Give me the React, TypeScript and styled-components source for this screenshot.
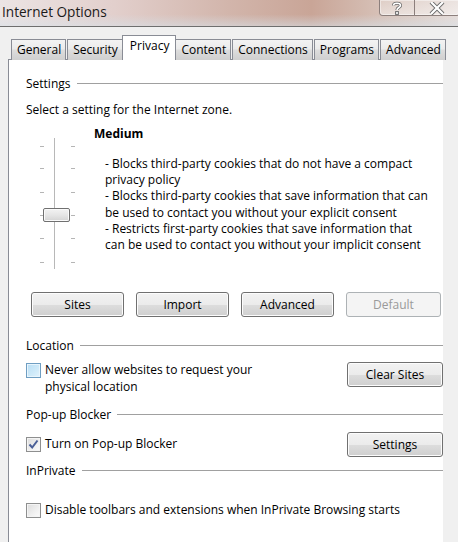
import styled, { createGlobalStyle, css } from 'styled-components';

const GlobalStyle = createGlobalStyle`
  html, body {
    margin: 0;
    padding: 0;
    background: #f0f0f0;
  }
  body {
    font-family: 'Open Sans', 'Noto Sans', sans-serif;
    font-size: 12px;
    color: #000;
  }
`;

const TABS = ['General', 'Security', 'Privacy', 'Content', 'Connections', 'Programs', 'Advanced'];
const ACTIVE_TAB = 'Privacy';

const DESCRIPTION = [
  '- Blocks third-party cookies that do not have a compact',
  'privacy policy',
  '- Blocks third-party cookies that save information that can',
  'be used to contact you without your explicit consent',
  '- Restricts first-party cookies that save information that',
  'can be used to contact you without your implicit consent',
];

function TrackBar() {
  const ticks = [145, 167, 191, 214, 237, 261].map((y) => y - 135);
  return (
    <svg width="68" height="140" viewBox="0 0 68 140">
      <rect x="28" y="2" width="2" height="131" fill="#d6d6d6" />
      <line x1="29.5" y1="2" x2="29.5" y2="133" stroke="#ffffff" />
      <line x1="28.5" y1="2" x2="28.5" y2="133" stroke="#b8b8b8" />
      {ticks.map((y) => (
        <g key={y} stroke="#b5b5b5">
          <line x1="14" y1={y + 0.5} x2="18" y2={y + 0.5} />
          <line x1="45" y1={y + 0.5} x2="49" y2={y + 0.5} />
        </g>
      ))}
      <defs>
        <linearGradient id="thumb" x1="0" y1="0" x2="0" y2="1">
          <stop offset="0" stopColor="#f4f4f4" />
          <stop offset="0.5" stopColor="#e6e6e6" />
          <stop offset="1" stopColor="#d2d2d2" />
        </linearGradient>
      </defs>
      <rect x="17.5" y="72.5" width="26" height="13" rx="1.5" fill="url(#thumb)" stroke="#707070" />
      <rect x="18.5" y="73.5" width="24" height="11" rx="1" fill="none" stroke="#fbfbfb" />
    </svg>
  );
}

function CheckMark() {
  return (
    <svg width="11" height="11" viewBox="0 0 11 11">
      <path d="M1.5 5.5 L4.2 8.5 L9.5 1.5" fill="none" stroke="#4a5f97" strokeWidth="2" />
    </svg>
  );
}

function HelpGlyph() {
  return (
    <svg width="14" height="14" viewBox="0 0 14 14">
      <path
        d="M3.5 4.5 C3.5 1.5 10.5 1.5 10.5 4.5 C10.5 6.5 7 6.5 7 9"
        fill="none"
        stroke="#6b6b6b"
        strokeWidth="3.2"
      />
      <path
        d="M3.5 4.5 C3.5 1.5 10.5 1.5 10.5 4.5 C10.5 6.5 7 6.5 7 9"
        fill="none"
        stroke="#ffffff"
        strokeWidth="1.6"
      />
      <rect x="5.6" y="10.6" width="2.8" height="2.8" fill="#ffffff" stroke="#6b6b6b" />
    </svg>
  );
}

function CloseGlyph() {
  return (
    <svg width="16" height="13" viewBox="0 0 16 13">
      <path d="M2 0 L14 12 M14 0 L2 12" stroke="#6b6b6b" strokeWidth="4" />
      <path d="M2 0 L14 12 M14 0 L2 12" stroke="#ffffff" strokeWidth="2.2" />
    </svg>
  );
}

export default function App() {
  return (
    <>
      <GlobalStyle />
      <Window>
        <TitleBar>
          <Title>Internet Options</Title>
          <CaptionButtons>
            <CaptionButton $w={34}>
              <HelpGlyph />
            </CaptionButton>
            <CaptionButton $w={44}>
              <CloseGlyph />
            </CaptionButton>
          </CaptionButtons>
        </TitleBar>

        <Dialog>
          <TabStrip>
            {TABS.map((tab) => (
              <Tab key={tab} $active={tab === ACTIVE_TAB}>
                {tab}
              </Tab>
            ))}
          </TabStrip>

          <Panel>
            <GroupHeader>Settings</GroupHeader>
            <Prompt>Select a setting for the Internet zone.</Prompt>

            <LevelRow>
              <TrackBar />
              <LevelText>
                <LevelName>Medium</LevelName>
                <Description>
                  {DESCRIPTION.map((line) => (
                    <div key={line}>{line}</div>
                  ))}
                </Description>
              </LevelText>
            </LevelRow>

            <ButtonRow>
              <Button>Sites</Button>
              <Button>Import</Button>
              <Button>Advanced</Button>
              <Button disabled>Default</Button>
            </ButtonRow>

            <GroupHeader $top={20}>Location</GroupHeader>
            <OptionRow $top={9}>
              <CheckOption>
                <CheckBox $hover />
                <span>
                  Never allow websites to request your
                  <br />
                  physical location
                </span>
              </CheckOption>
              <Button $wide>Clear Sites</Button>
            </OptionRow>

            <GroupHeader $top={11}>Pop-up Blocker</GroupHeader>
            <OptionRow $top={10}>
              <CheckOption $centered>
                <CheckBox>
                  <CheckMark />
                </CheckBox>
                <span>Turn on Pop-up Blocker</span>
              </CheckOption>
              <Button $wide>Settings</Button>
            </OptionRow>

            <GroupHeader $top={5}>InPrivate</GroupHeader>
            <OptionRow $top={20}>
              <CheckOption $centered>
                <CheckBox />
                <span>Disable toolbars and extensions when InPrivate Browsing starts</span>
              </CheckOption>
            </OptionRow>
          </Panel>
        </Dialog>
      </Window>
    </>
  );
}

const Window = styled.div`
  width: 458px;
  height: 542px;
  overflow: hidden;
  display: flex;
  flex-direction: column;
  background: #f0f0f0;
`;

const TitleBar = styled.div`
  height: 26px;
  flex: none;
  display: flex;
  align-items: flex-start;
  border-bottom: 1px solid #6e6e6e;
  background:
    linear-gradient(to bottom, rgba(255, 255, 255, 0) 55%, rgba(214, 224, 232, 0.55) 100%),
    linear-gradient(
      to right,
      #ece4e4 0%,
      #e2cfcc 25%,
      #d2b5ab 50%,
      #c9a597 68%,
      #d8c4bb 85%,
      #e6dcd8 100%
    );
`;

const Title = styled.div`
  padding: 2px 0 0 2px;
  font-family: 'Open Sans', 'Noto Sans', sans-serif;
  font-size: 13.6px;
  line-height: 20px;
  color: #1a1a1a;
`;

const CaptionButtons = styled.div`
  margin-left: auto;
  margin-right: -2px;
  display: flex;
  height: 15px;
  border: 1px solid #8c7f7c;
  border-top: none;
  border-radius: 0 0 4px 4px;
  overflow: hidden;
  box-shadow: inset 0 0 0 1px rgba(255, 255, 255, 0.45);
`;

const CaptionButton = styled.div<{ $w: number }>`
  width: ${(p) => p.$w}px;
  display: flex;
  align-items: flex-end;
  justify-content: center;
  background: linear-gradient(to bottom, rgba(255, 255, 255, 0.2), rgba(255, 255, 255, 0.45));
  & + & {
    border-left: 1px solid #8c7f7c;
  }
`;

const Dialog = styled.div`
  flex: 1;
  padding: 9px 0 0 8px;
  display: flex;
  flex-direction: column;
`;

const TabStrip = styled.div`
  display: flex;
  align-items: flex-end;
  padding-left: 3px;
  height: 24px;
  position: relative;
  z-index: 1;
  margin-bottom: -1px;
`;

const Tab = styled.div<{ $active?: boolean }>`
  height: 20px;
  line-height: 19px;
  padding: 0 4px 0 5px;
  border: 1px solid #898c95;
  border-bottom: none;
  margin-right: 1px;
  color: #000;
  white-space: nowrap;
  background: linear-gradient(to bottom, #f3f3f3 0%, #ebebeb 45%, #dddddd 50%, #cfcfcf 100%);

  ${(p) =>
    p.$active &&
    css`
      height: 24px;
      line-height: 20px;
      background: #ffffff;
      margin: 0 -1px 0 -2px;
      padding: 0 6px 0 7px;
      position: relative;
      z-index: 2;
    `}
`;

const Panel = styled.div`
  flex: 1;
  background: #ffffff;
  border-left: 1px solid #898c95;
  border-top: 1px solid #898c95;
  padding: 15px 0 0 17px;
  width: 417px;
`;

const GroupHeader = styled.div<{ $top?: number }>`
  display: flex;
  align-items: center;
  gap: 6px;
  height: 16px;
  margin-top: ${(p) => p.$top ?? 0}px;
  color: #000;

  &::after {
    content: '';
    flex: 1;
    height: 1px;
    background: #a0a0a0;
  }
`;

const Prompt = styled.div`
  margin-top: 11px;
  line-height: 16px;
`;

const LevelRow = styled.div`
  display: flex;
  align-items: flex-start;
  margin-top: 8px;

  svg {
    margin-top: 10px;
    flex: none;
  }
`;

const LevelText = styled.div`
  display: flex;
  flex-direction: column;
`;

const LevelName = styled.div`
  font-weight: bold;
  line-height: 16px;
`;

const Description = styled.div`
  margin: 14px 0 0 11px;
  line-height: 16.2px;
  white-space: nowrap;
`;

const ButtonRow = styled.div`
  display: flex;
  gap: 12px;
  margin: 16px 0 0 5px;
`;

const Button = styled.button<{ $wide?: boolean }>`
  width: ${(p) => (p.$wide ? 96 : 93)}px;
  height: 25px;
  padding: 0;
  font-family: inherit;
  font-size: 12px;
  color: #000;
  border: 1px solid #707070;
  border-radius: 3px;
  box-shadow: inset 0 0 0 1px #fcfcfc;
  background: linear-gradient(to bottom, #f2f2f2 0%, #ebebeb 50%, #dddddd 51%, #cfcfcf 100%);

  &:disabled {
    width: 95px;
    color: #9a9a9a;
    border-color: #adb2b5;
    background: #f4f4f4;
    box-shadow: none;
  }
`;

const OptionRow = styled.div<{ $top?: number }>`
  display: flex;
  align-items: flex-start;
  justify-content: space-between;
  margin-top: ${(p) => p.$top ?? 0}px;
`;

const CheckOption = styled.div<{ $centered?: boolean }>`
  display: flex;
  align-items: ${(p) => (p.$centered ? 'center' : 'flex-start')};
  gap: 4px;
  line-height: 16.5px;
  min-height: 25px;
  white-space: nowrap;
`;

const CheckBox = styled.span<{ $hover?: boolean }>`
  width: 13px;
  height: 13px;
  flex: none;
  display: flex;
  align-items: center;
  justify-content: center;
  border: 1px solid #8e8f8f;
  background: linear-gradient(135deg, #dcdcdc 0%, #f0f0f0 60%, #fbfbfb 100%);
  box-shadow: inset 0 0 0 1px #f4f4f4;

  ${(p) =>
    p.$hover &&
    css`
      margin-top: 1px;
      border-color: #6f9ec2;
      background: linear-gradient(135deg, #b9def5 0%, #cfeaf9 60%, #e2f3fc 100%);
      box-shadow: inset 0 0 0 1px #e8f5fd;
    `}
`;
